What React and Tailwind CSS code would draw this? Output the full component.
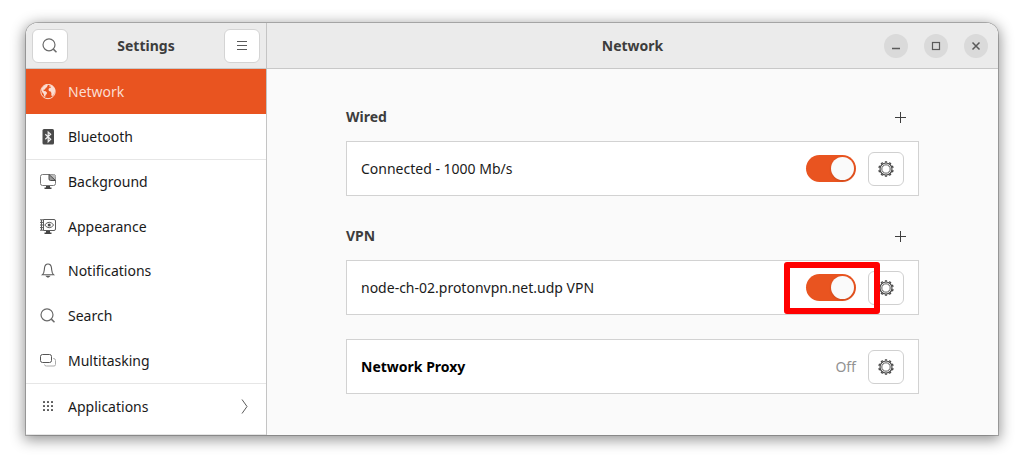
import React, { useState } from 'react';

const GlobeIcon = () => (
  <svg width="16" height="16" viewBox="0 0 16 16" fill="none">
    <circle cx="8" cy="7.5" r="7.2" stroke="currentColor" strokeWidth="1" />
    <path fill="currentColor" d="M1.6 5C2.600 2.800 4.200 1.300 6.500.7L8 1.200 7 2.200l.4.9-1.500.6-1 1.700-1.500.4.400 1.300 1.900.2 1.400 1.500-.6 1.500-.9.8-.4 1.800-1.200-.6-.3-2.400-1.300-1.400-.8-2z" />
    <path fill="currentColor" d="M9 1.700l2-.8c2 .8 3.500 2.400 4 4.300.3 1.800-.1 3.500-1 5l-1.400 1.800-1.300-.6.1-2.300-.8-1.600-1.700-.5-.4-1.900 1.300-1.300 1.300-.2-.2-.9-1.500-.1z" />
  </svg>
);

const BluetoothIcon = () => (
  <svg width="16" height="16" viewBox="0 0 16 16" fill="none">
    <rect x="2.500" y="0" width="11.500" height="15.500" rx="1.500" fill="#4a4a4a" />
    <path d="M5.300 5.200l5.400 5-2.500 2.500V3l2.500 2.300-5.400 5" stroke="#eee" strokeWidth="1.200" />
  </svg>
);

const BackgroundIcon = () => (
  <svg width="16" height="16" viewBox="0 0 16 16" fill="none">
    <rect x=".5" y=".5" width="15" height="11" rx="2" stroke="#777" />
    <path d="M9 .5h4.500q2 0 2 2V7z" fill="#bbb" />
    <path d="M9 .5V5q0 1.500 1.500 1.500h5z" fill="#999" stroke="#4a4a4a" />
    <path d="M6 12h4v1.500h1.500V15h-7v-1.500H6z" fill="#444" />
  </svg>
);

const AppearanceIcon = () => (
  <svg width="16" height="16" viewBox="0 0 16 16" fill="none" stroke="#5a5a5a">
    <path d="M3.500.5H14q1.500 0 1.500 1.500v8q0 1.500-1.500 1.500H3.500z" />
    <path d="M0 .8h3.500M0 3.400h3.500M0 6h3.500M0 8.600h3.500M0 11.200h3.500M1.500 1v10" />
    <path d="M4.700 6q4.500-5.500 9 0-4.500 5.500-9 0z" />
    <circle cx="9.200" cy="6" r="1.500" fill="#4a4a4a" stroke="none" />
    <path d="M6 12h4v1.500h1.500V15h-7v-1.500H6z" fill="#444" stroke="none" />
  </svg>
);

const BellIcon = () => (
  <svg width="16" height="16" viewBox="0 0 16 16" fill="none" stroke="#5a5a5a" strokeWidth="1.100">
    <path d="M2.300 11.800h11.400C11.300 9.800 11.900 7.500 11.500 5 11.200 2.300 10.200 1 8 1S4.800 2.300 4.500 5c-.4 2.500.2 4.800-2.200 6.800z" />
    <path d="M6.500 13.200q1.500 1.800 3 0z" fill="#5a5a5a" />
  </svg>
);

const SearchIcon = () => (
  <svg width="16" height="16" viewBox="0 0 16 16" fill="none" stroke="#6a6a6a" strokeWidth="1.200">
    <circle cx="7" cy="6.800" r="6" />
    <path d="M11.300 11.100l3.200 3.200" strokeWidth="1.500" />
  </svg>
);

const MultitaskingIcon = () => (
  <svg width="16" height="16" viewBox="0 0 16 16" fill="none">
    <rect x=".5" y="1.500" width="11" height="8" rx="2" stroke="#555" />
    <path d="M13 5.500h.5q2 0 2 2v4q0 1.500-1.500 1.500H6.500Q4.500 13 4.500 11.500" stroke="#aaa" />
  </svg>
);

const AppsIcon = () => (
  <svg width="16" height="16" viewBox="0 0 16 16" fill="#5a5a5a">
    {[2, 6, 10].map((y) =>
      [3, 7, 11].map((x) => <rect key={`${x}-${y}`} x={x} y={y} width="2" height="2" rx=".5" />)
    )}
  </svg>
);

const GearIcon = () => (
  <svg width="16" height="16" viewBox="0 0 16 16" fill="none" stroke="#4a4a4a">
    <circle cx="8" cy="8" r="4.200" strokeWidth=".9" />
    <circle cx="8" cy="8" r="6" strokeWidth="1.200" />
    <circle cx="8" cy="8" r="7.100" strokeWidth="1.400" pathLength="100" strokeDasharray="5 5" strokeDashoffset="2.500" transform="rotate(-90 8 8)" />
  </svg>
);

const PlusIcon = () => (
  <svg width="12" height="12" viewBox="0 0 12 12" stroke="#3d3d3d">
    <path d="M0 6.500h11M5.500 1v11" />
  </svg>
);

const groups = [
  {
    className: 'h-[91px] border-b border-[#e6e6e6]',
    items: [
      { label: 'Network', Icon: GlobeIcon },
      { label: 'Bluetooth', Icon: BluetoothIcon },
    ],
  },
  {
    className: 'h-56 border-b border-[#e6e6e6]',
    items: [
      { label: 'Background', Icon: BackgroundIcon },
      { label: 'Appearance', Icon: AppearanceIcon },
      { label: 'Notifications', Icon: BellIcon },
      { label: 'Search', Icon: SearchIcon },
      { label: 'Multitasking', Icon: MultitaskingIcon },
    ],
  },
  {
    className: 'h-[45px]',
    items: [{ label: 'Applications', Icon: AppsIcon, more: true }],
  },
];

function Sidebar() {
  const [active, setActive] = useState('Network');

  return (
    <aside className="flex w-[241px] shrink-0 flex-col rounded-tl-xl border-r border-[#c4c4c4] bg-white">
      <header className="flex h-[46px] items-center justify-between rounded-tl-xl border-b border-[#c8c8c8] bg-[#ebebeb] px-[6px]">
        <button aria-label="Search settings" className="flex h-[34px] w-9 items-center justify-center rounded-md border border-[#d4d4d4] bg-white">
          <SearchIcon />
        </button>
        <h1 className="font-bold text-[#3d3d3d]">Settings</h1>
        <button aria-label="Menu" className="flex h-[34px] w-9 items-center justify-center rounded-md border border-[#d4d4d4] bg-white">
          <svg width="12" height="12" viewBox="0 0 12 12" stroke="#5a5a5a">
            <path d="M1 1.500h10M1 5.500h10M1 9.500h10" />
          </svg>
        </button>
      </header>
      <nav className="grow border-b border-[#e6e6e6] pb-[5px]">
        {groups.map((group) => (
          <div key={group.items[0].label} className={`grid auto-rows-fr ${group.className}`}>
            {group.items.map(({ label, Icon, more }) => (
              <button
                key={label}
                onClick={() => setActive(label)}
                className={`flex items-center gap-3 pr-4 pl-[14px] text-left ${
                  active === label ? 'bg-[#e95420] text-[#fbddd2]' : 'text-[#1a1a1a]'
                }`}
              >
                <Icon />
                <span className="grow">{label}</span>
                {more && (
                  <svg width="10" height="16" viewBox="0 0 10 16" fill="none" stroke="#5a5a5a">
                    <path d="M2 .5l5 7-5 7" />
                  </svg>
                )}
              </button>
            ))}
          </div>
        ))}
      </nav>
    </aside>
  );
}

function SectionTitle({ title, addLabel }) {
  return (
    <div className="mb-3 flex h-6 items-center justify-between">
      <h3 className="font-bold text-[#3d3d3d]">{title}</h3>
      <button aria-label={addLabel} className="flex h-6 w-9 items-center justify-center">
        <PlusIcon />
      </button>
    </div>
  );
}

function Row({ children }) {
  return (
    <div className="flex h-[55px] items-center gap-3 border border-[#d2d2d2] bg-white px-[14px]">
      {children}
    </div>
  );
}

function Switch({ id, highlighted }) {
  const [on, setOn] = useState(true);

  return (
    <span className="relative flex">
      <input
        id={id}
        type="checkbox"
        role="switch"
        checked={on}
        onChange={() => setOn(!on)}
        className="flex h-[27px] w-[50px] appearance-none items-center rounded-full bg-[#c8c8c8] px-[2px] before:size-[23px] before:rounded-full before:bg-[#fafafa] before:shadow-sm checked:justify-end checked:bg-[#e95420]"
      />
      {highlighted && (
        <span className="pointer-events-none absolute -top-3 -right-6 z-10 h-[52px] w-24 rounded-[3px] border-6 border-[#ff0000]" />
      )}
    </span>
  );
}

function GearButton({ label }) {
  return (
    <button aria-label={label} className="flex h-[34px] w-9 items-center justify-center rounded-md border border-[#d0d0d0] bg-white">
      <GearIcon />
    </button>
  );
}

function WindowButton({ label, children }) {
  return (
    <button aria-label={label} className="flex size-6 items-center justify-center rounded-full bg-[#dadada]">
      <svg width="10" height="10" viewBox="0 0 10 10" fill="none" stroke="#5a5a5a">
        {children}
      </svg>
    </button>
  );
}

export default function App() {
  return (
    <div className="bg-white px-[26px] pt-[23px] pb-[29px] font-['Noto_Sans',sans-serif] text-sm">
      <div className="flex rounded-t-xl shadow-[0_0_0_1px_rgba(0,0,0,0.22),0_3px_14px_2px_rgba(0,0,0,0.42)]">
        <Sidebar />
        <main className="flex grow flex-col rounded-tr-xl bg-[#fafafa]">
          <header className="grid h-[46px] grid-cols-[1fr_auto_1fr] items-center rounded-tr-xl border-b border-[#c8c8c8] bg-[#ebebeb] px-[10px]">
            <h2 className="col-start-2 font-bold text-[#3d3d3d]">Network</h2>
            <div className="flex justify-end gap-4">
              <WindowButton label="Minimize">
                <path d="M1 7.500h8" strokeWidth="1.500" />
              </WindowButton>
              <WindowButton label="Maximize">
                <rect x="1.500" y="1.500" width="7" height="7" strokeWidth="1.200" />
              </WindowButton>
              <WindowButton label="Close">
                <path d="M1.500 1.500l7 7M8.500 1.500l-7 7" strokeWidth="1.500" />
              </WindowButton>
            </div>
          </header>

          <div className="mx-auto w-full max-w-[573px] pt-9 text-[#1a1a1a]">
            <section>
              <SectionTitle title="Wired" addLabel="Add wired connection" />
              <Row>
                <label htmlFor="wired" className="grow">Connected - 1000 Mb/s</label>
                <Switch id="wired" />
                <GearButton label="Wired options" />
              </Row>
            </section>

            <section className="mt-7">
              <SectionTitle title="VPN" addLabel="Add VPN" />
              <Row>
                <label htmlFor="vpn" className="grow">node-ch-02.protonvpn.net.udp VPN</label>
                <Switch id="vpn" highlighted />
                <GearButton label="VPN options" />
              </Row>
            </section>

            <section className="mt-6">
              <Row>
                <h3 className="grow font-bold text-black">Network Proxy</h3>
                <span className="text-[#929292]">Off</span>
                <GearButton label="Proxy options" />
              </Row>
            </section>
          </div>
        </main>
      </div>
    </div>
  );
}
